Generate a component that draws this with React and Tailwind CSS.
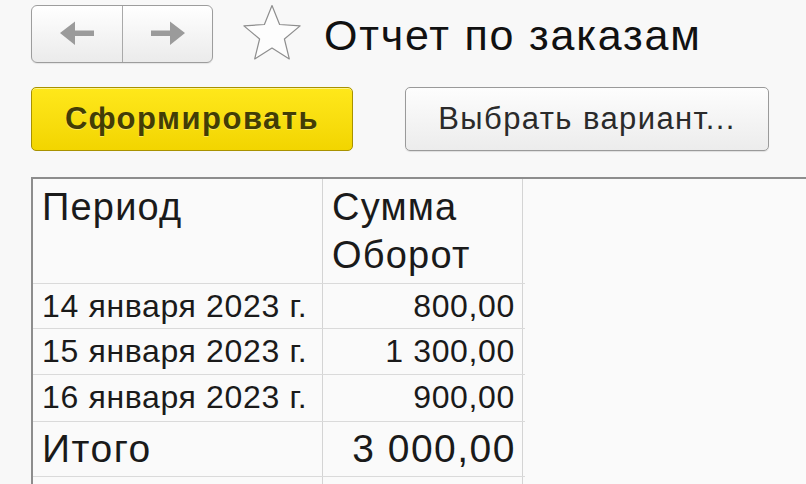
import React from "react";

const starPoints = (() => {
  const cx = 30, cy = 32, R = 29.5, r = 13;
  const pts = [];
  for (let i = 0; i < 10; i++) {
    const a = (Math.PI / 5) * i - Math.PI / 2;
    const rad = i % 2 === 0 ? R : r;
    pts.push(`${(cx + rad * Math.cos(a)).toFixed(1)},${(cy + rad * Math.sin(a)).toFixed(1)}`);
  }
  return pts.join(" ");
})();

function Arrow({ dir }) {
  return (
    <svg width="36" height="26" viewBox="0 0 36 26">
      <g transform={dir === "right" ? "translate(36 0) scale(-1 1)" : undefined} fill="#9b9b9b">
        <path d="M1 12 L16 0.5 L16 9.5 L35 9.5 L35 15 L16 15 L16 24 Z" />
      </g>
    </svg>
  );
}

const rows = [
  { period: "14 января 2023 г.", sum: "800,00", h: "h-[45px]" },
  { period: "15 января 2023 г.", sum: "1 300,00", h: "h-[46px]" },
  { period: "16 января 2023 г.", sum: "900,00", h: "h-[47px]" },
];

export default function App() {
  return (
    <div
      className="w-[806px] h-[484px] overflow-hidden bg-[#f8f8f8] text-[#1a1a1a]"
      style={{ fontFamily: '"Liberation Sans", Arial, sans-serif' }}
    >
      {/* Toolbar */}
      <div className="flex items-center pl-[31px] pt-[5px] h-[63px]">
        <div className="flex w-[182px] h-[58px] rounded-[6px] border border-[#9d9d9d] bg-gradient-to-b from-white to-[#ebebeb] shadow-[0_1px_1px_rgba(0,0,0,0.08)]">
          <div className="w-[91px] flex items-center justify-center border-r border-[#a9a9a9]">
            <Arrow dir="left" />
          </div>
          <div className="flex-1 flex items-center justify-center">
            <Arrow dir="right" />
          </div>
        </div>
        <svg className="ml-[29px] -mt-[2px]" width="60" height="60" viewBox="0 0 60 60">
          <polygon points={starPoints} fill="#fdfdfd" stroke="#8e8e8e" strokeWidth="1.2" strokeLinejoin="round" />
        </svg>
        <h1 className="ml-[22px] text-[43px] leading-none tracking-[1.8px] text-[#111] mt-[2px]">Отчет по заказам</h1>
      </div>

      {/* Buttons */}
      <div className="flex items-center pl-[31px] mt-[24px]">
        <button className="w-[322px] h-[64px] rounded-[5px] border border-[#a89200] bg-gradient-to-b from-[#ffe81a] to-[#f2d500] text-[31px] tracking-[1.5px] font-bold text-[#433d05] shadow-[inset_0_1px_0_rgba(255,255,255,0.5)] [text-shadow:0_1px_0_rgba(255,255,255,0.35)]">
          Сформировать
        </button>
        <button className="ml-[52px] w-[364px] h-[64px] rounded-[5px] border border-[#9a9a9a] bg-gradient-to-b from-[#fdfdfd] to-[#ececec] text-[31px] tracking-[1.4px] text-[#2a2a2a] shadow-[0_1px_1px_rgba(0,0,0,0.1)]">
          Выбрать вариант...
        </button>
      </div>

      {/* Report table */}
      <div className="ml-[31px] mt-[26px] border-t-2 border-l-2 border-[#8d8d8d] bg-[#fafafa]">
        <div className="w-[492px]">
          <div className="flex h-[105px] border-b border-[#dadada] text-[38px] leading-[48px] tracking-[1.2px]">
            <div className="w-[290px] border-r border-[#d4d4d4] pl-[9px] pt-[4px]">Период</div>
            <div className="w-[200px] border-r border-[#d4d4d4] pl-[9px] pt-[4px]">
              Сумма
              <br />
              Оборот
            </div>
          </div>
          {rows.map((r) => (
            <div key={r.period} className={`flex ${r.h} border-b border-[#dadada] text-[32px] leading-[44px] tracking-[0.65px]`}>
              <div className="w-[290px] border-r border-[#d4d4d4] pl-[9px] whitespace-nowrap">{r.period}</div>
              <div className="w-[200px] border-r border-[#d4d4d4] pr-[7px] text-right">{r.sum}</div>
            </div>
          ))}
          <div className="flex h-[55px] border-b border-[#dadada] text-[39px] leading-[54px] tracking-[1.5px]">
            <div className="w-[290px] border-r border-[#d4d4d4] pl-[9px]">Итого</div>
            <div className="w-[200px] border-r border-[#d4d4d4] pr-[6px] text-right">3 000,00</div>
          </div>
          <div className="flex h-[20px]">
            <div className="w-[290px] border-r border-[#d4d4d4]" />
            <div className="w-[200px] border-r border-[#d4d4d4]" />
          </div>
        </div>
      </div>
    </div>
  );
}
